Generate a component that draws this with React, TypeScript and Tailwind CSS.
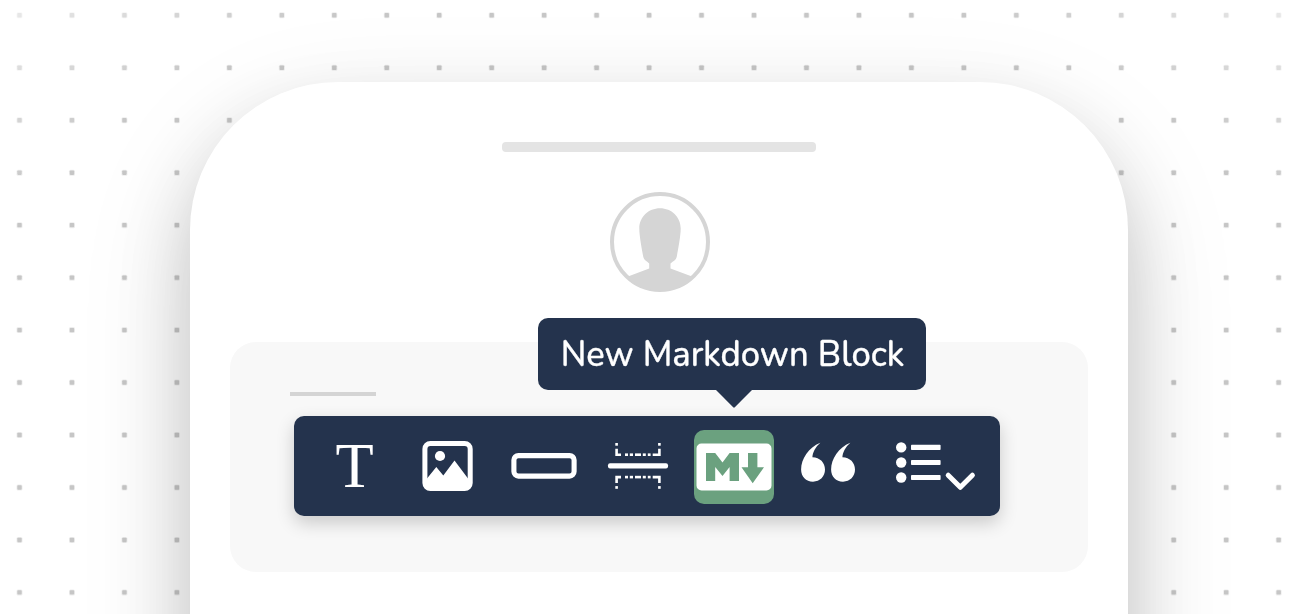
import React from "react";

const STEP = 52.465;
const COLS = Array.from({ length: 25 }, (_, i) => 19.5 + i * STEP);
const ROWS = Array.from({ length: 12 }, (_, i) => 15.3 + i * STEP);

function DotGrid() {
  return (
    <svg className="absolute inset-0" width="1300" height="614" viewBox="0 0 1300 614" aria-hidden="true">
      <defs>
        <radialGradient
          id="fade"
          gradientUnits="userSpaceOnUse"
          cx="0"
          cy="0"
          r="1"
          gradientTransform="translate(649 700) scale(1042 890)"
        >
          <stop offset="0.82" stopColor="#fff" />
          <stop offset="1" stopColor="#fff" stopOpacity="0.35" />
        </radialGradient>
        <mask id="fadeMask" maskUnits="userSpaceOnUse" x="0" y="0" width="1300" height="614">
          <rect width="1300" height="614" fill="url(#fade)" />
        </mask>
      </defs>
      <g mask="url(#fadeMask)" fill="#000">
        {ROWS.map((y) =>
          COLS.map((x) => (
            <g key={`${x}-${y}`}>
              <rect x={x - 3} y={y - 3} width="6" height="6" rx="1.5" fillOpacity="0.07" />
              <rect x={x - 2.2} y={y - 2.2} width="4.4" height="4.4" rx="0.8" fillOpacity="0.17" />
            </g>
          ))
        )}
      </g>
    </svg>
  );
}

function Avatar() {
  return (
    <svg className="mt-10 h-[100px] w-[100px]" viewBox="0 0 100 100" aria-hidden="true">
      <defs>
        <clipPath id="face">
          <circle cx="50" cy="50" r="49" />
        </clipPath>
      </defs>
      <circle cx="50" cy="50" r="48" fill="#fff" stroke="#d5d5d5" strokeWidth="4" />
      <path
        clipPath="url(#face)"
        fill="#d5d5d5"
        d="M50 16.300C38.500 16.300 29.300 25 29.300 36.500C29.300 44 32 58 33.300 65C34 68 36.500 69 39.200 71.500V76.500L14 86V101H86V86L60.500 76.500V71.500C63.500 69 66 68 66.700 65C68 58 70.700 44 70.700 36.500C70.700 25 61.500 16.300 50 16.300Z"
      />
    </svg>
  );
}

function Slot({ children, active = false }: { children: React.ReactNode; active?: boolean }) {
  return (
    <button
      type="button"
      className={
        active
          ? "h-[74px] w-20 shrink-0 rounded-[10px] bg-[#6ba17f]"
          : "flex h-[74px] w-20 shrink-0 items-center justify-center"
      }
    >
      {children}
    </button>
  );
}

function Icon({ children, width = 80 }: { children: React.ReactNode; width?: number }) {
  return (
    <svg className="block shrink-0" width={width} height="74" viewBox={`0 0 ${width} 74`} fill="#fff" aria-hidden="true">
      {children}
    </svg>
  );
}

function ImageIcon() {
  return (
    <Icon>
      <rect x="15.900" y="13.500" width="45.300" height="45" rx="5.500" fill="none" stroke="#fff" strokeWidth="5" />
      <circle cx="31" cy="26" r="5.100" />
      <path d="M18 48.500L27.300 37L34.300 45.500L45.500 30.500L59 48.500V59H18Z" />
    </Icon>
  );
}

function ButtonIcon() {
  return (
    <Icon>
      <rect x="9.900" y="25.600" width="60.200" height="20.500" rx="4.500" fill="none" stroke="#fff" strokeWidth="5.100" />
    </Icon>
  );
}

function DividerIcon() {
  const half = (
    <>
      <rect x="16.300" y="13" width="2.600" height="2.700" />
      <path d="M16.300 18.700h2.600v4.700h3.100v2.600h-5.700z" />
      <rect x="26" y="23.400" width="3" height="2.600" />
      <rect x="30.800" y="23.400" width="3.200" height="2.600" />
      <rect x="36" y="23.400" width="6" height="2.600" />
      <rect x="43.800" y="23.400" width="3" height="2.600" />
      <rect x="48.800" y="23.400" width="2.800" height="2.600" />
      <path d="M59.100 18.700h2.600v7.300h-8v-2.600h5.400z" />
      <rect x="59.100" y="13" width="2.600" height="2.700" />
    </>
  );
  return (
    <Icon>
      {half}
      <rect x="9" y="33.200" width="60" height="5.300" rx="2" />
      <g transform="matrix(1 0 0 -1 0 71.800)">{half}</g>
    </Icon>
  );
}

function MarkdownIcon() {
  return (
    <Icon>
      <path
        fillRule="evenodd"
        d="M7.500 13.500H72.500A5 5 0 0 1 77.500 18.500V55.500A5 5 0 0 1 72.500 60.500H7.500A5 5 0 0 1 2.500 55.500V18.500A5 5 0 0 1 7.500 13.500ZM12 23V51H21.200V37L28.500 46L35.600 37V51H45V23H35.600L28.500 32.500L21.200 23ZM54 23V37.200H47.500L58.700 53.200L70 37.200H63.400V23Z"
      />
    </Icon>
  );
}

function QuoteIcon() {
  const mark =
    "M31.300 12.800C19.500 17.500 12.100 29 12.100 39.600C12.100 46.800 17 51.700 24 51.700C31 51.700 36 46.500 36 39.600C36 32.600 31 27.500 23.400 27.300C23.600 22.500 26.500 17 31.300 12.800Z";
  return (
    <Icon>
      <path d={mark} />
      <path d={mark} transform="translate(30 0)" />
    </Icon>
  );
}

function ListIcon() {
  return (
    <Icon width={96}>
      {[17.4, 32.500, 47.500].map((y) => (
        <g key={y}>
          <circle cx="17.200" cy={y} r="5.200" />
          <rect x="27" y={y - 2.600} width="29.600" height="5.200" rx="0.800" />
        </g>
      ))}
      <path d="M64.200 45.200L76.300 57.300L88.400 45.200" fill="none" stroke="#fff" strokeWidth="5" strokeLinecap="round" strokeLinejoin="round" />
    </Icon>
  );
}

function Tooltip() {
  return (
    <div className="absolute left-[244px] top-[-98px] flex h-[72px] w-[388px] items-center justify-center rounded-[10px] bg-[#24334d]">
      <span className="mt-px scale-x-[0.973] whitespace-nowrap pt-px pl-[2px] font-['Nunito','Lato',sans-serif] text-[35.5px] font-medium leading-[72px] text-white [-webkit-text-stroke:0.3px_#fff]">
        New Markdown Block
      </span>
      <svg className="absolute left-[177px] top-[71px]" width="38" height="19" viewBox="0 0 38 19" aria-hidden="true">
        <path d="M0 0H38L19.800 18.300Q19 19 18.200 18.300Z" fill="#24334d" />
      </svg>
    </div>
  );
}

function Toolbar() {
  return (
    <div className="relative ml-1 mt-5 flex h-[100px] w-[706px] gap-[15px] rounded-[10px] bg-[#24334d] pl-5 pt-[14px] shadow-[0_7px_18px_rgba(0,0,0,0.19)]">
      <Slot>
        <span className="mb-px ml-px font-['Liberation_Serif',serif] text-[62.5px] leading-[71px] text-white">T</span>
      </Slot>
      <Slot><ImageIcon /></Slot>
      <Slot><ButtonIcon /></Slot>
      <Slot><DividerIcon /></Slot>
      <Slot active><MarkdownIcon /></Slot>
      <Slot><QuoteIcon /></Slot>
      <button type="button" className="h-[74px] w-24 shrink-0"><ListIcon /></button>
      <Tooltip />
    </div>
  );
}

export default function App() {
  return (
    <div className="relative h-[614px] w-[1300px] overflow-hidden bg-white">
      <DotGrid />
      <main className="relative ml-[190px] mt-[82px] flex h-[900px] w-[938px] flex-col items-center rounded-t-[148px] bg-white pt-[60px] shadow-[0_38px_72px_rgba(0,0,0,0.18),0_38px_120px_rgba(0,0,0,0.11)]">
        <div className="h-[10px] w-[314px] rounded-[4px] bg-[#e4e4e4]" />
        <div className="ml-[2px]">
          <Avatar />
        </div>
        <section className="mt-[50px] h-[230px] w-[858px] rounded-[26px] bg-[#f8f8f8] pl-[60px] pt-[50px]">
          <div className="h-1 w-[86px] bg-[#d4d4d4]" />
          <Toolbar />
        </section>
      </main>
    </div>
  );
}
